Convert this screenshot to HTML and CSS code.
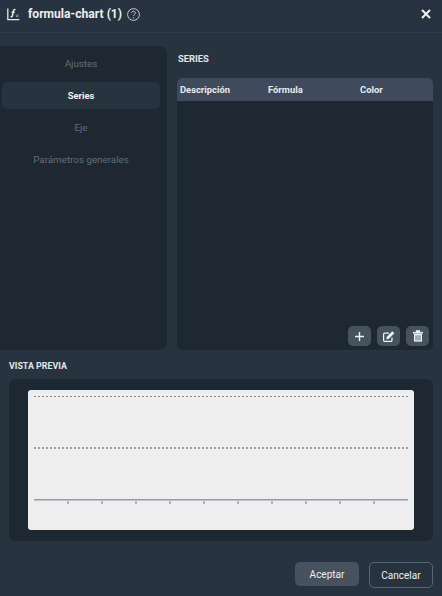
FILE: index.html
```html
<!DOCTYPE html>
<html lang="en">
<head>
  <meta charset="UTF-8">
  <meta name="viewport" content="width=device-width, initial-scale=1.0">
  <title>formula-chart (1)</title>
  <link rel="stylesheet" href="styles.css">
</head>
<body>
  <div class="dialog">
    <header class="dialog-header">
      <svg class="fx-icon" width="13" height="14" viewBox="0 0 13 14">
        <path d="M.8 1.5V12.4M.2 12.6H12.4" fill="none" stroke="#e6e8ea" stroke-width="1.3"/>
        <path d="M3.6 9.8c1.4.3 1.7-.5 2-2l.7-3.6c.3-1.4 1-2 2.2-1.6M4.6 5.2h3.1" fill="none" stroke="#eceef0" stroke-width="1.5"/>
        <path d="M9 7.4l2.6 2.6M11.6 7.4L9 10" fill="none" stroke="#aab2ba" stroke-width=".9"/>
      </svg>
      <span class="dialog-title">formula-chart (1)</span>
      <svg class="help-icon" width="13" height="13" viewBox="0 0 13 13">
        <circle cx="6.5" cy="6.5" r="5.9" fill="none" stroke="#d5d9dc" stroke-width=".9"/>
        <path d="M4.6 5c0-1.1.9-1.8 1.9-1.8s1.9.7 1.9 1.7c0 1.4-1.9 1.4-1.9 2.9" fill="none" stroke="#d5d9dc" stroke-width=".9"/>
        <circle cx="6.5" cy="9.8" r=".6" fill="#d5d9dc"/>
      </svg>
      <svg class="close-icon" width="10" height="10" viewBox="0 0 10 10">
        <path d="M1 1L9 9M9 1L1 9" fill="none" stroke="#f2f3f4" stroke-width="2"/>
      </svg>
    </header>

    <div class="top-row">
      <nav class="side-nav">
        <div class="nav-item">Ajustes</div>
        <div class="nav-item active">Series</div>
        <div class="nav-item">Eje</div>
        <div class="nav-item">Parámetros generales</div>
      </nav>

      <section class="series">
        <h2 class="section-title series-title">SERIES</h2>
        <div class="series-panel">
          <div class="table-head">
            <span class="col-desc">Descripción</span>
            <span class="col-formula">Fórmula</span>
            <span class="col-color">Color</span>
          </div>
          <div class="table-actions">
            <button class="icon-btn">
              <svg width="9" height="9" viewBox="0 0 9 9"><path d="M4.5 0V9M0 4.5H9" stroke="#f2f3f4" stroke-width="1.4" fill="none"/></svg>
            </button>
            <button class="icon-btn">
              <svg width="12" height="11" viewBox="0 0 12 11">
                <path d="M9 6.5V9.6a.8.8 0 0 1-.8.8H1.4a.8.8 0 0 1-.8-.8V3a.8.8 0 0 1 .8-.8H6" fill="none" stroke="#f2f3f4" stroke-width="1.2"/>
                <path d="M3.6 6L9.3.3l2 2L5.6 8 3.4 8.3z" fill="#f2f3f4"/>
              </svg>
            </button>
            <button class="icon-btn">
              <svg width="10" height="12" viewBox="0 0 10 12">
                <path d="M0 2.3H10V3.3H0zM3.2 2.3V.5H6.8V2.3" fill="#f2f3f4" stroke="#f2f3f4" stroke-width=".6"/>
                <path d="M1 4H9V11.6H1z" fill="#f2f3f4"/>
                <path d="M3 5.2V10.4M5 5.2V10.4M7 5.2V10.4" stroke="#47525f" stroke-width=".9"/>
              </svg>
            </button>
          </div>
        </div>
      </section>
    </div>

    <h2 class="section-title preview-title">VISTA PREVIA</h2>
    <section class="preview-panel">
      <div class="chart">
        <svg width="386" height="140" viewBox="0 0 386 140">
          <path d="M6 6.5H380" stroke="#7c8794" stroke-width="1" stroke-dasharray="2 2" fill="none"/>
          <path d="M6 58H380" stroke="#a0a0a6" stroke-width="2" stroke-dasharray="2 2" fill="none"/>
          <path d="M6 109.5H380" stroke="#969ba1" stroke-width="1" fill="none"/>
          <path d="M6 110.5H380" stroke="#c0c4c8" stroke-width="1" fill="none"/>
          <path d="M40 111V114M74 111V114M108 111V114M142 111V114M176 111V114M210 111V114M244 111V114M278 111V114M312 111V114M346 111V114" stroke="#8b939b" stroke-width="1.2" fill="none"/>
        </svg>
      </div>
    </section>

    <footer class="dialog-footer">
      <button class="btn btn-primary">Aceptar</button>
      <button class="btn btn-outline">Cancelar</button>
    </footer>
  </div>
</body>
</html>
```

FILE: styles.css
```css
html, body {
  margin: 0;
  height: 100%;
}

body {
  background-color: #283340;
  color: #e8eaec;
  font-family: Roboto, "Liberation Sans", sans-serif;
  overflow: hidden;
}

.dialog {
  width: 442px;
  height: 596px;
  display: flex;
  flex-direction: column;
}

.dialog-header {
  height: 28px;
  border-bottom: 1px solid #303b49;
  display: flex;
  align-items: center;
  padding: 0 11px 4px 7px;
}

.fx-icon {
  margin-right: 8px;
}

.dialog-title {
  font-size: 12.1px;
  font-weight: 700;
  color: #eceef0;
}

.help-icon {
  margin-left: 5px;
}

.close-icon {
  margin-left: auto;
}

.top-row {
  display: flex;
  height: 304px;
  margin-top: 13px;
}

.side-nav {
  width: 172px;
  margin-left: -5px;
  background-color: #1e2832;
  border-radius: 8px;
  padding: 4px 7px 0;
  box-sizing: border-box;
  display: flex;
  flex-direction: column;
  gap: 5px;
}

.nav-item {
  height: 27px;
  line-height: 27px;
  text-align: center;
  font-size: 9.8px;
  color: #626d76;
}

.nav-item.active {
  background-color: #283340;
  border-radius: 6px;
  color: #eef0f2;
  font-weight: 700;
  font-size: 9.4px;
}

.series {
  width: 256px;
  margin-left: 10px;
  display: flex;
  flex-direction: column;
}

.section-title {
  margin: 0;
  font-size: 9.4px;
  font-weight: 700;
  color: #e3e6e8;
  line-height: 12px;
}

.series-title {
  padding: 7px 0 13px 1px;
}

.series-panel {
  flex: 1;
  background-color: #1e2832;
  border-radius: 5px;
  display: flex;
  flex-direction: column;
  justify-content: space-between;
}

.table-head {
  height: 23px;
  background-color: #3f4b5d;
  border-radius: 5px 5px 0 0;
  display: flex;
  align-items: center;
  font-size: 9.4px;
  font-weight: 700;
  color: #e8eaec;
  padding-left: 3px;
}

.col-desc {
  width: 88px;
}

.col-formula {
  width: 92px;
}

.table-actions {
  display: flex;
  justify-content: flex-end;
  gap: 6px;
  padding: 0 4px 4px 0;
}

.icon-btn {
  width: 23px;
  height: 20px;
  padding: 0;
  border: none;
  border-radius: 5px;
  background-color: #47525f;
  display: flex;
  align-items: center;
  justify-content: center;
}

.preview-title {
  font-size: 8.9px;
  padding: 10px 0 7px 9px;
}

.preview-panel {
  margin-left: 9px;
  width: 424px;
  height: 162px;
  box-sizing: border-box;
  background-color: #1e2832;
  border-radius: 6px;
  padding: 11px 19px;
}

.chart {
  width: 386px;
  height: 140px;
  background-color: #eeeeee;
  border-radius: 3px;
}

.chart svg {
  display: block;
}

.dialog-footer {
  display: flex;
  justify-content: flex-end;
  align-items: flex-start;
  gap: 10px;
  padding: 21px 9px 0 0;
}

.btn {
  width: 64px;
  font-family: inherit;
  font-size: 10px;
  color: #eceef0;
  border-radius: 5px;
  padding: 0;
}

.btn-primary {
  height: 24px;
  background-color: #47525f;
  border: none;
}

.btn-outline {
  height: 26px;
  background: none;
  border: 1px solid #586673;
}
```
